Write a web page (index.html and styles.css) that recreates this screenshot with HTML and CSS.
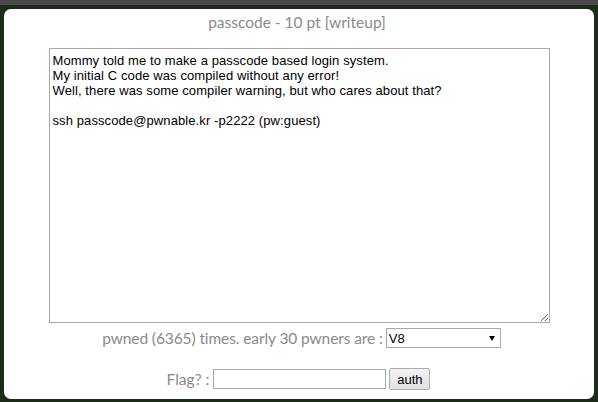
FILE: index.html
```html
<!DOCTYPE html>
<html>
<head>
<meta charset="utf-8">
<link rel="stylesheet" href="styles.css">
</head>
<body>
<div class="topbar"></div>
<div class="frame">
  <div class="panel">
    <div class="title">passcode - 10 pt [<span class="link">writeup</span>]</div>
    <textarea class="desc" readonly>Mommy told me to make a passcode based login system.
My initial C code was compiled without any error!
Well, there was some compiler warning, but who cares about that?

ssh passcode@pwnable.kr -p2222 (pw:guest)</textarea>
    <div class="row pwned">
      <span class="label">pwned (6365) times. early 30 pwners are :</span>
      <span class="selwrap">
        <select class="sel"><option>V8</option></select>
      </span>
    </div>
    <div class="row flag">
      <span class="label">Flag? :</span>
      <input class="flaginput" type="text">
      <button class="auth">auth</button>
    </div>
  </div>
</div>
</body>
</html>
```

FILE: styles.css
```css
html, body {
  margin: 0;
  padding: 0;
}
body {
  width: 598px;
  height: 402px;
  background: #1b2c1b;
  overflow: hidden;
}
.topbar {
  height: 5px;
  background: #4a4a4a;
}
.frame {
  padding: 4px 4px 3px 4px;
}
.panel {
  height: 390px;
  background: #ffffff;
  border-radius: 7px;
  display: flex;
  flex-direction: column;
  align-items: center;
  box-sizing: border-box;
  padding-top: 4px;
}
.title {
  font-family: Lato, "Liberation Sans", sans-serif;
  font-size: 15.5px;
  line-height: 18px;
  color: #8a8a8a;
  margin-left: -4px;
}
.link {
  color: #8a8a8a;
}
.desc {
  display: block;
  margin-top: 17px;
  width: 501px;
  height: 275px;
  box-sizing: border-box;
  border: 1px solid #a9a9a9;
  padding: 4px 2px 2px 3px;
  font-family: "Liberation Sans", Arial, sans-serif;
  font-size: 13px;
  line-height: 15px;
  letter-spacing: 0.1px;
  color: #000;
  resize: both;
  outline: none;
}
.row {
  display: flex;
  align-items: center;
  font-family: Lato, "Liberation Sans", sans-serif;
  color: #8a8a8a;
}
.pwned {
  margin-top: 5px;
  margin-left: 5px;
  font-size: 15.5px;
  letter-spacing: -0.1px;
  gap: 3px;
}
.selwrap {
  position: relative;
  display: inline-block;
}
.selwrap::after {
  content: "";
  position: absolute;
  right: 6px;
  top: 8px;
  border-left: 3px solid transparent;
  border-right: 3px solid transparent;
  border-top: 5px solid #000;
  pointer-events: none;
}
.sel {
  appearance: none;
  -webkit-appearance: none;
  display: block;
  width: 115px;
  height: 20px;
  box-sizing: border-box;
  border: 1px solid #a9a9a9;
  border-radius: 0;
  background: #fff;
  padding: 0 0 0 2px;
  font-family: "Liberation Sans", Arial, sans-serif;
  font-size: 13px;
  color: #000;
}
.flag {
  margin-top: 20px;
  margin-left: -1px;
  font-size: 15.5px;
  gap: 3px;
}
.flag .label {
  margin-right: 1px;
}
.flaginput {
  width: 173px;
  height: 20px;
  box-sizing: border-box;
  border: 1px solid #a9a9a9;
  padding: 0 2px;
  margin: 0;
  font-family: "Liberation Sans", Arial, sans-serif;
  font-size: 13px;
}
.auth {
  width: 41px;
  height: 22px;
  box-sizing: border-box;
  margin: 0;
  border: 1px solid #acacac;
  border-radius: 2px;
  background: linear-gradient(#f2f2f2, #e2e2e2);
  font-family: "Liberation Sans", Arial, sans-serif;
  font-size: 13px;
  color: #000;
  padding: 0;
}
```
